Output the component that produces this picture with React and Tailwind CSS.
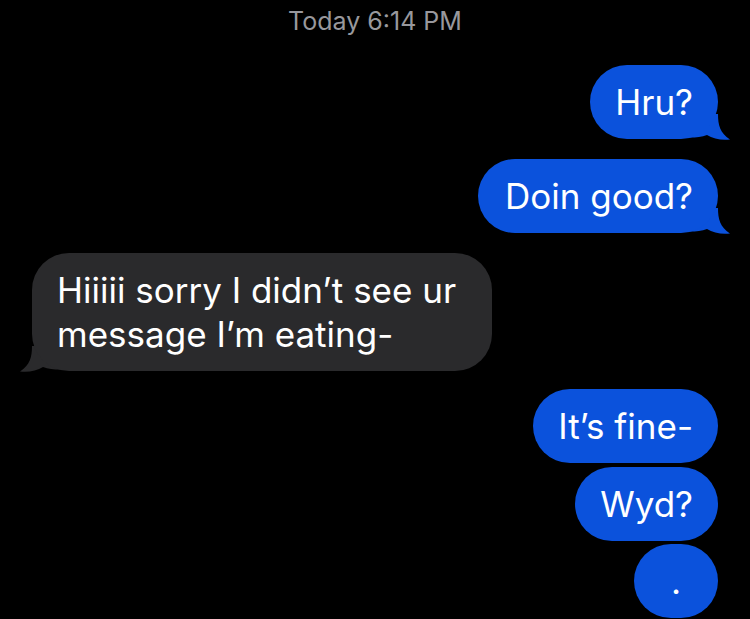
const BLUE = "#0b52dc";

const Tail = ({ color, side }) => (
  <svg
    width="40"
    height="26"
    viewBox="0 0 40 26"
    className={
      side === "right"
        ? "absolute right-[-12px] bottom-[-1px]"
        : "absolute left-[-12px] bottom-[-1px] -scale-x-100"
    }
  >
    <path
      d="M0,0 H28 C28,11 30,19 40,25.5 C32,26.5 23,25 17,21 C12,23 6,23.5 0,23.5 Z"
      fill={color}
    />
  </svg>
);

const Sent = ({ children, tail, className = "" }) => (
  <div className={`relative self-end ${className}`}>
    <div className="relative z-10 rounded-[37px] bg-[#0b52dc] px-[25px] py-[15px] text-[35px] leading-[44px] text-white">
      {children}
    </div>
    {tail && <Tail color={BLUE} side="right" />}
  </div>
);

const App = () => {
  return (
    <div
      className="h-[619px] w-[750px] overflow-hidden bg-black px-[32px]"
      style={{ fontFamily: "Inter, 'Liberation Sans', sans-serif" }}
    >
      <div className="flex flex-col">
        {/* Timestamp */}
        <div className="pt-[6px] text-center text-[25px] leading-[30px] text-[#98989d]">
          Today 6:14 PM
        </div>

        <Sent tail className="mt-[29px]">Hru?</Sent>
        <Sent tail className="mt-[20px]">
          <span className="pl-[2px]">Doin good?</span>
        </Sent>

        {/* Received */}
        <div className="relative mt-[20px] self-start">
          <div className="relative z-10 w-[460px] rounded-[37px] bg-[#2a2a2c] px-[25px] py-[15px] text-[35px] leading-[44px] text-white">
            Hiiiii sorry I didn’t see ur message I’m eating-
          </div>
          <Tail color="#2a2a2c" side="left" />
        </div>

        <Sent className="mt-[18px]">It’s fine-</Sent>
        <Sent className="mt-[4px]">Wyd?</Sent>
        <div className="mt-[3px] w-[84px] self-end rounded-[37px] bg-[#0b52dc] py-[15px] text-center text-[35px] leading-[44px] text-white">
          .
        </div>
      </div>
    </div>
  );
};

export default App;
